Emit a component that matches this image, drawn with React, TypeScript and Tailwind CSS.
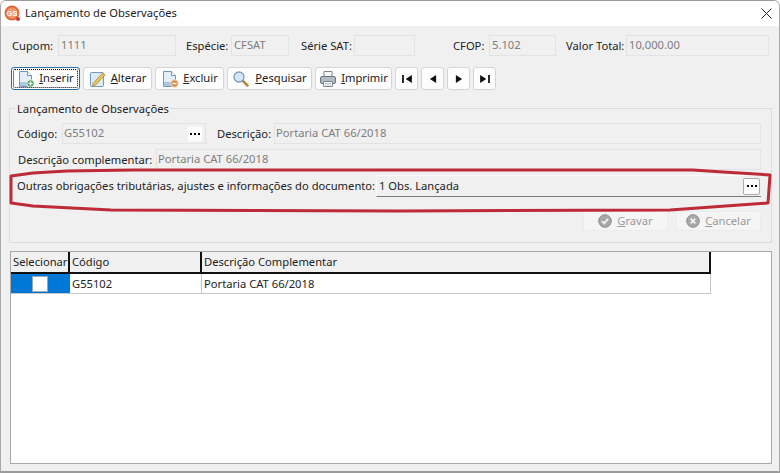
import React from 'react'

const font = 'font-["Noto_Sans",sans-serif]'

function Label({ children, className = '' }: { children: React.ReactNode; className?: string }) {
  return <span className={`text-[11.2px] leading-none whitespace-nowrap text-[#222] ${className}`}>{children}</span>
}

function Input({ value, className = '' }: { value?: string; className?: string }) {
  return (
    <div className={`h-[21px] border border-[#e3e3e3] flex items-center text-[11.2px] text-[#7d7d7d] whitespace-nowrap ${className}`}>
      {value}
    </div>
  )
}

function DocIcon({ badge }: { badge: 'plus' | 'minus' }) {
  return (
    <svg width="18" height="18" viewBox="0 0 18 18" className="shrink-0">
      <path d="M2.500 1.500h8l4 4v11h-12z" fill="#e4eef8" stroke="#6f97bf" />
      <path d="M10.500 1.500v4h4" fill="#fff" stroke="#6f97bf" />
      <path d="M3 12h11v4H3z" fill="#a9c6e3" />
      {badge === 'plus' ? (
        <>
          <circle cx="13.500" cy="13.500" r="3.800" fill="#5fa965" stroke="#e6f2e6" />
          <path d="M11.500 13.500h4M13.500 11.500v4" stroke="#fff" strokeWidth="1.200" />
        </>
      ) : (
        <>
          <circle cx="13.500" cy="13.500" r="3.800" fill="#d9893f" stroke="#f5e3cf" />
          <path d="M11.500 13.500h4" stroke="#fff" strokeWidth="1.400" />
        </>
      )}
    </svg>
  )
}

function EditIcon() {
  return (
    <svg width="18" height="18" viewBox="0 0 18 18" className="shrink-0">
      <rect x="1.500" y="2.500" width="13" height="14" rx="1" fill="#dfeaf5" stroke="#6f97bf" />
      <path d="M4 13.500 13.500 3l2.500 2L6.500 15l-3 1z" fill="#e8c25c" stroke="#a98a3c" strokeWidth="0.800" />
    </svg>
  )
}

function SearchIcon() {
  return (
    <svg width="18" height="18" viewBox="0 0 18 18" className="shrink-0">
      <path d="m10.500 10.500 5 5" stroke="#b78a4a" strokeWidth="2.600" strokeLinecap="round" />
      <circle cx="7" cy="7" r="5" fill="#d6e8f8" stroke="#7c9cbc" strokeWidth="1.300" />
    </svg>
  )
}

function PrintIcon() {
  return (
    <svg width="18" height="18" viewBox="0 0 18 18" className="shrink-0">
      <path d="M5 7V1.500h8V7" fill="#f6f8fa" stroke="#7d8894" />
      <rect x="1.500" y="6.500" width="15" height="7" rx="1.500" fill="#b4bcc5" stroke="#6d7782" />
      <path d="M4.500 11.500h9v5h-9z" fill="#fff" stroke="#7d8894" />
      <path d="M6 13.500h6M6 15h6" stroke="#a6aeb7" strokeWidth="0.700" />
    </svg>
  )
}

function ToolButton({ icon, u, rest, className = '', focus = false, textClass = 'ml-[4px]' }: { icon: React.ReactNode; u: string; rest: string; className?: string; focus?: boolean; textClass?: string }) {
  return (
    <div className={`relative h-[23px] rounded-[3px] bg-[#fdfdfd] border flex items-center justify-center text-[11.2px] text-[#222] shrink-0 ${focus ? 'border-[#2c6f9e]' : 'border-[#d5d5d5]'} ${className}`}>
      {focus && <div className="absolute inset-[1px] border border-dotted border-black rounded-[2px]" />}
      {icon}
      <span className={textClass}><span className="underline">{u}</span>{rest}</span>
    </div>
  )
}

function NavButton({ children }: { children: React.ReactNode }) {
  return (
    <div className="h-[23px] w-[23px] rounded-[3px] bg-[#fdfdfd] border border-[#d5d5d5] flex items-center justify-center shrink-0">
      <svg width="10" height="8" viewBox="0 0 11 9" fill="#111">{children}</svg>
    </div>
  )
}

function DotsButton({ className = '' }: { className?: string }) {
  return (
    <div className={`rounded-[2px] bg-[#fdfdfd] border flex items-center justify-center gap-[2px] shrink-0 ${className}`}>
      <i className="w-[2px] h-[2px] bg-black" />
      <i className="w-[2px] h-[2px] bg-black" />
      <i className="w-[2px] h-[2px] bg-black" />
    </div>
  )
}

function DisabledButton({ u, rest, color }: { u: string; rest: string; color: 'ok' | 'x' }) {
  return (
    <div className="w-[85px] h-[20px] rounded-[2px] bg-[#f5f5f5] border border-[#ececec] flex items-center justify-center text-[11.2px] text-[#9b9b9b]">
      <svg width="14" height="14" viewBox="0 0 14 14" className="mr-[5px]">
        <circle cx="7" cy="7" r="6.300" fill="#a8a8a8" stroke="#8c8c8c" />
        {color === 'ok' ? (
          <path d="m4 7 2.200 2.300L10 4.800" fill="none" stroke="#f2f2f2" strokeWidth="1.800" />
        ) : (
          <path d="m4.700 4.700 4.600 4.600M9.300 4.700 4.700 9.300" stroke="#f2f2f2" strokeWidth="1.800" />
        )}
      </svg>
      <span><span className="underline">{u}</span>{rest}</span>
    </div>
  )
}

export default function App() {
  return (
    <div className={`w-[780px] h-[473px] bg-white overflow-hidden ${font}`}>
      <div className="relative w-[780px] h-[473px] border-t border-r border-l border-b-2 border-t-[#9a9a9a] border-r-[#a8a8a8] border-l-[#a8a8a8] border-b-[#9a9a9a] rounded-tl-[6px] rounded-tr-[6px] overflow-hidden bg-[#f0f0f0] flex flex-col">
        {/* title bar */}
        <div className="h-[25px] bg-white flex items-center pl-[3px] pr-[5px] shrink-0">
          <svg width="17" height="17" viewBox="0 0 17 17" className="shrink-0">
            <circle cx="8" cy="8" r="7.500" fill="#e0693a" />
            <circle cx="8" cy="8" r="5.500" fill="#ee9a6e" />
            <text x="8" y="10.800" textAnchor="middle" fontSize="7.500" fontWeight="700" fill="#fff" fontFamily="Liberation Sans">GS</text>
            <circle cx="14" cy="14" r="2" fill="#c23b34" />
          </svg>
          <span className="ml-[4px] text-[11.2px] text-[#222] whitespace-nowrap">Lançamento de Observações</span>
          <svg width="11" height="11" viewBox="0 0 11 11" className="ml-auto mr-[2px]">
            <path d="m.5.5 10 10M10.500.5l-10 10" stroke="#222" strokeWidth="1" />
          </svg>
        </div>

        {/* document info */}
        <div className="flex items-center mt-[9px] pl-[11px] shrink-0">
          <Label className="w-[46px]">Cupom:</Label>
          <Input value="1111" className="w-[118px] pl-[2px]" />
          <Label className="ml-[10px] w-[45px]">Espécie:</Label>
          <Input value="CFSAT" className="w-[58px] pl-[2px]" />
          <Label className="ml-[12px] w-[53px]">Série SAT:</Label>
          <Input className="w-[61px]" />
          <Label className="ml-[38px] w-[36px]">CFOP:</Label>
          <Input value="5.102" className="w-[67px] pl-[2px]" />
          <Label className="ml-[10px] w-[60px]">Valor Total:</Label>
          <Input value="10,000.00" className="w-[143px] pl-[2px]" />
        </div>

        {/* toolbar */}
        <div className="flex mt-[11px] pl-[10px] gap-[3px] shrink-0">
          <ToolButton focus icon={<DocIcon badge="plus" />} u="I" rest="nserir" className="w-[69px]" />
          <ToolButton icon={<EditIcon />} u="A" rest="lterar" className="w-[69px]" />
          <ToolButton icon={<DocIcon badge="minus" />} u="E" rest="xcluir" className="w-[69px]" />
          <ToolButton icon={<SearchIcon />} u="P" rest="esquisar" className="w-[85px]" textClass="ml-[5px]" />
          <ToolButton icon={<PrintIcon />} u="I" rest="mprimir" className="w-[77px]" />
          <div className="flex gap-[3px]">
            <NavButton><path d="M0 0h2v9H0zM11 0v9L4 4.500z" /></NavButton>
            <NavButton><path d="M9 0v9L2 4.500z" /></NavButton>
            <NavButton><path d="M2 0v9l7-4.500z" /></NavButton>
            <NavButton><path d="M0 0v9l7-4.500zM9 0h2v9H9z" /></NavButton>
          </div>
        </div>

        {/* group box */}
        <div className="relative mt-[18px] ml-[8px] w-[763px] h-[135px] border border-[#dcdcdc] shrink-0 pt-[14px] pl-[7px] pr-[10px]">
          <span className="absolute left-[6px] top-[-7px] px-[1px] bg-[#f0f0f0] text-[11.2px] leading-[14px] text-[#222] whitespace-nowrap">Lançamento de Observações</span>
          <div className="flex items-center">
            <Label className="w-[45px]">Código:</Label>
            <div className="w-[144px] h-[21px] border border-[#e3e3e3] flex items-center pl-[1px] pr-[2px] text-[11.2px] text-[#7d7d7d]">
              G55102
              <DotsButton className="ml-auto w-[16px] h-[16px] border-[#f4f4f4]" />
            </div>
            <Label className="ml-[11px] w-[57px]">Descrição:</Label>
            <Input value="Portaria CAT 66/2018" className="flex-1 pl-[1px]" />
          </div>
          <div className="flex items-center mt-[5px] pl-[1px]">
            <Label className="w-[138px]">Descrição complementar:</Label>
            <Input value="Portaria CAT 66/2018" className="flex-1 pl-[1px]" />
          </div>
          <div className="flex items-center mt-[5px]">
            <Label className="w-[359px]">Outras obrigações tributárias, ajustes e informações do documento:</Label>
            <div className="flex-1 h-[22px] border-b border-b-[#7a7a7a] border-t border-t-[#fafafa] border-l border-l-[#fafafa] bg-[#f0f0f0] flex items-center pl-[2px] pr-[1px] text-[11.2px] text-[#222]">
              1 Obs. Lançada
              <DotsButton className="ml-auto w-[17px] h-[17px] border-[#aaa]" />
            </div>
          </div>
          <div className="flex justify-end gap-[8px] mt-[14px]">
            <DisabledButton u="G" rest="ravar" color="ok" />
            <DisabledButton u="C" rest="ancelar" color="x" />
          </div>
        </div>

        {/* grid */}
        <div className="mt-[8px] ml-[9px] w-[762px] h-[213px] border border-[#a8a8a8] bg-white shrink-0 text-[11.2px] text-[#222]">
          <div className="flex h-[20px] w-[700px] bg-[#f0f0f0] border-b-2 border-b-[#111] box-content">
            <div className="w-[59px] border-r-2 border-r-[#111] pl-[2px] leading-[20px] whitespace-nowrap">Selecionar</div>
            <div className="w-[132px] border-r-2 border-r-[#111] pl-[2px] leading-[20px]">Código</div>
            <div className="flex-1 border-r-2 border-r-[#111] pl-[2px] leading-[20px]">Descrição Complementar</div>
          </div>
          <div className="flex h-[19px] w-[700px] border-b border-b-[#c8c8c8] box-content">
            <div className="w-[59px] bg-[#0078d7] flex items-center justify-center pr-[1px]">
              <div className="w-[16px] h-[16px] bg-white border border-[#9aa7b3]" />
            </div>
            <div className="w-[132px] border-r border-r-[#c8c8c8] pl-[2px] leading-[19px]">G55102</div>
            <div className="flex-1 border-r border-r-[#c8c8c8] pl-[2px] leading-[19px]">Portaria CAT 66/2018</div>
          </div>
        </div>

        {/* red marker drawn over the form */}
        <svg width="780" height="473" className="absolute left-[-1px] top-[-1px] pointer-events-none">
          <path d="M11 176 L33 173 L67 171 L133 170 L400 170 L693 170 L723 172 L770 175 L768 203 L670 210 L400 211 L111 210 L33 206 L11 203 Z" fill="none" stroke="#bc2b36" strokeWidth="3" strokeLinejoin="round" />
        </svg>
      </div>
    </div>
  )
}
